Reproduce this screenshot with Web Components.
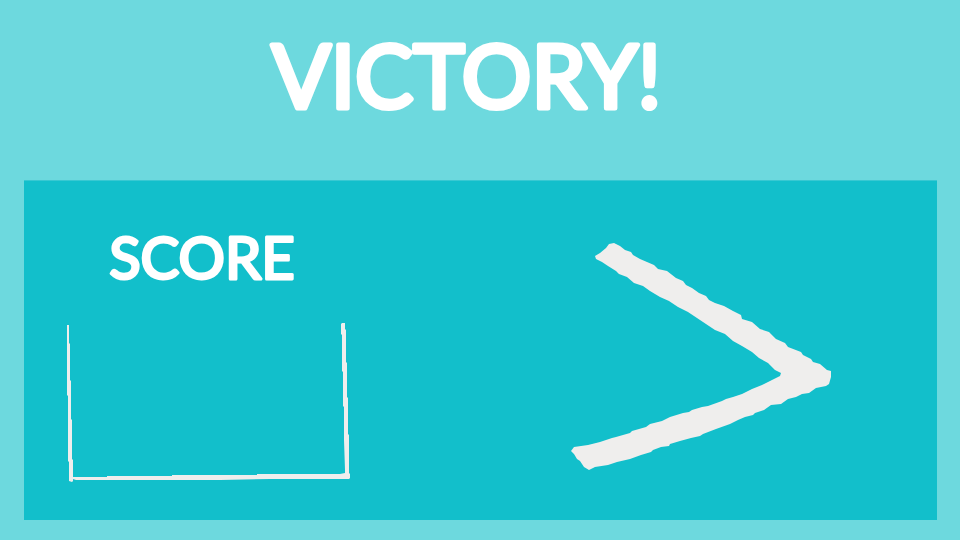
<!DOCTYPE html>
<html lang="en">
<head>
<meta charset="utf-8">
<title>Victory</title>
<style>
  body { margin: 0; background: #6dd9de; }
</style>
</head>
<body>
<victory-screen></victory-screen>
<script>
// Text with a rounded marker-like outline.
class MarkerText extends HTMLElement {
  constructor() {
    super();
    this.attachShadow({ mode: 'open' }).innerHTML = `
      <style>
        :host { display: block; }
        svg { display: block; width: 100%; height: 1.2em; overflow: visible; }
        text { fill: currentColor; stroke: currentColor; stroke-width: var(--marker, 4px); stroke-linejoin: round; text-anchor: middle; }
      </style>
      <svg><text x="50%" y="1em"></text></svg>`;
  }
  connectedCallback() {
    this.shadowRoot.querySelector('text').textContent = this.getAttribute('label');
  }
}

class VictoryScreen extends HTMLElement {
  constructor() {
    super();
    this.attachShadow({ mode: 'open' }).innerHTML = `
      <style>
        :host {
          display: flex; flex-direction: column; box-sizing: border-box;
          min-height: 100vh; padding: 0 23px 20px 24px;
          color: #fff; font-family: Lato, sans-serif;
        }
        header { height: 180px; padding: 21px 28px 0 0; box-sizing: border-box; }
        h1 { margin: 0; font-size: 87px; font-weight: 400; --marker: 5px; }
        main {
          flex: 1; display: flex; justify-content: space-between; align-items: flex-start;
          box-sizing: border-box; background: #12bfcb; border-top: 1px solid #38c8d2;
          padding: 40px 105px 37px 42px;
        }
        score-frame { flex: 0 1 284px; }
        next-arrow { flex: 0 1 262px; padding-top: 21px; }
      </style>
      <header><h1><marker-text label="VICTORY!"></marker-text></h1></header>
      <main>
        <score-frame label="SCORE"></score-frame>
        <next-arrow></next-arrow>
      </main>`;
  }
}

class ScoreFrame extends HTMLElement {
  constructor() {
    super();
    this.attachShadow({ mode: 'open' }).innerHTML = `
      <style>
        :host { display: block; }
        h2 { height: 68px; margin: 0 12px 33px 0; font-size: 58px; font-weight: 400; --marker: 3px; }
        svg { display: block; width: 100%; height: auto; }
      </style>
      <h2></h2>
      <svg viewBox="66 322 284 160" fill="#efeeed" aria-hidden="true">
        <path d="M67 325H69V343L70 344V380L71 381V419L72 420V459L73 460V477H107V476H172V475H257V474H340L345 473V470L344 440V407L343 406V372L342 371V335L341 334V324L342 323H345V329L346 330V362L347 363V397L348 398V434L349 435V473L350 474V478L349 479H270L220 480H76L73 479V481L72 482L69 481V462L68 461V396L67 395Z"/>
      </svg>`;
  }
  connectedCallback() {
    const text = document.createElement('marker-text');
    text.setAttribute('label', this.getAttribute('label'));
    this.shadowRoot.querySelector('h2').replaceChildren(text);
  }
}

class NextArrow extends HTMLElement {
  constructor() {
    super();
    this.attachShadow({ mode: 'open' }).innerHTML = `
      <style>
        :host { display: block; }
        button { display: block; width: 100%; margin: 0; padding: 0; border: 0; background: none; cursor: pointer; }
        svg { display: block; width: 100%; height: auto; }
      </style>
      <button type="button" aria-label="Next">
        <svg viewBox="570 242 262 229" fill="#efeeed" aria-hidden="true">
          <path d="M595 256L600 253 606 248 609 244 614 243 620 246 625 250 631 252 633 255 640 259 647 262 654 265 658 269 667 271 676 278 683 281 686 285 692 288 699 293 706 296 709 300 715 303 724 306 733 311 741 315 742 319 752 322 760 329 769 332 776 339 785 343 788 347 801 352 803 355 811 359 813 362 820 364 827 370 831 371 831 377 829 384 826 386 816 388 809 393 802 394 796 397 788 399 781 404 771 405 764 410 755 413 753 415 745 417 738 420 730 424 716 429 703 434 700 436 691 438 680 441 670 444 669 446 661 447 653 450 651 452 641 455 630 459 617 462 608 465 595 467 589 470 584 467 580 461 577 459 574 454 571 451 574 447 588 445 600 442 612 438 616 437 630 433 632 431 646 427 650 424 662 421 670 417 683 413 689 412 692 410 702 407 708 406 722 401 726 399 733 397 742 394 752 389 762 385 772 380 780 376 781 373 775 370 768 363 759 358 752 352 742 346 733 341 725 334 715 330 706 324 697 318 688 312 678 307 669 301 660 297 650 291 643 286 634 283 627 277 619 274 616 271 608 266 602 262 596 259z"/>
        </svg>
      </button>`;
  }
}

customElements.define('marker-text', MarkerText);
customElements.define('score-frame', ScoreFrame);
customElements.define('next-arrow', NextArrow);
customElements.define('victory-screen', VictoryScreen);
</script>
</body>
</html>
